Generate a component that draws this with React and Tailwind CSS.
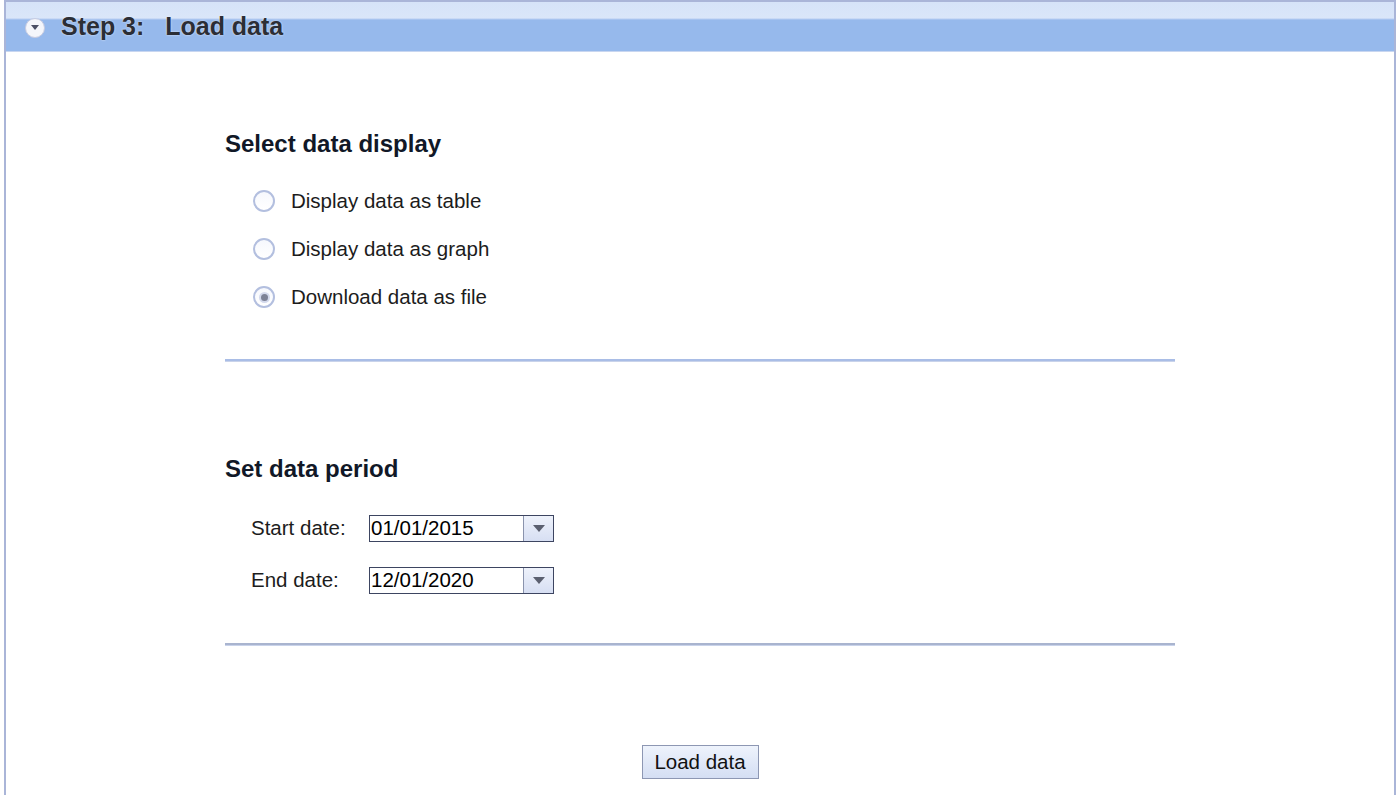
import React from "react";

function Radio({ checked }) {
  return (
    <span className="relative inline-flex items-center justify-center w-[22px] h-[22px] rounded-full border-2 border-[#b3bfdf] bg-gradient-to-b from-[#f6f8fd] to-[#ffffff] shrink-0">
      {checked && <span className="w-[7px] h-[7px] rounded-full bg-[#7d8296] ring-2 ring-[#d3d9ec]" />}
    </span>
  );
}

function DateBox({ value }) {
  return (
    <div className="flex w-[185px] h-[27px] border border-[#3d4561] bg-white">
      <div className="flex-1 flex items-center pl-[1px] text-[20.5px] text-black leading-none">{value}</div>
      <div className="w-[30px] border-l border-[#8a93ad] bg-gradient-to-b from-[#eef2fb] to-[#d7dff3] flex items-center justify-center">
        <svg width="12" height="8" viewBox="0 0 12 8"><path d="M0 0 L12 0 L6 7 Z" fill="#5b6070" /></svg>
      </div>
    </div>
  );
}

export default function App() {
  return (
    <div className="w-[1400px] h-[795px] bg-white overflow-hidden" style={{ fontFamily: '"Liberation Sans", Arial, sans-serif' }}>
      <div className="ml-[4px] w-[1392px] h-[795px] border-x-[2px] border-t-[2px] border-[#aab5d8] flex flex-col">
        <div className="h-[50px] flex items-center border-b border-[#c8d6f0] bg-[linear-gradient(#d6e3f8_0,#dae6f9_16px,#b8cdf2_17px,#96b9ec_18px,#96b9ec_100%)]">
          <span className="ml-[19px] mt-[2px] w-[20px] h-[20px] rounded-full bg-[#f4f6fb] border border-[#c7cbe0] flex items-center justify-center">
            <svg width="8" height="6" viewBox="0 0 8 6"><path d="M0 0 L8 0 L4 5 Z" fill="#4b5066" /></svg>
          </span>
          <span className="ml-[16px] text-[25px] font-bold text-[#2b2e36] whitespace-pre leading-none" style={{ textShadow: "0 0 2px #eef2fa" }}>Step 3:   Load data</span>
        </div>
        <div className="flex-1 pl-[219px]">
          <div className="w-[950px]">
            <h2 className="mt-[80px] text-[24px] font-bold text-[#111827] leading-none">Select data display</h2>
            <div className="mt-[34px] ml-[28px] flex flex-col gap-[26px]">
              {[
                ["Display data as table", false],
                ["Display data as graph", false],
                ["Download data as file", true],
              ].map(([t, c]) => (
                <label key={t} className="flex items-center gap-[16px] h-[22px] text-[20.5px] text-[#1c1c1c]">
                  <Radio checked={c} />
                  <span className="leading-none">{t}</span>
                </label>
              ))}
            </div>
            <div className="mt-[51px] h-[3px] bg-[#a9bde6] border-b border-[#c9d3ea]" />
            <h2 className="mt-[95px] text-[24px] font-bold text-[#111827] leading-none">Set data period</h2>
            <div className="mt-[34px] ml-[26px] flex flex-col gap-[25px]">
              <div className="flex items-center">
                <span className="w-[118px] text-[20.5px] text-[#1c1c1c] leading-none">Start date:</span>
                <DateBox value="01/01/2015" />
              </div>
              <div className="flex items-center">
                <span className="w-[118px] text-[20.5px] text-[#1c1c1c] leading-none">End date:</span>
                <DateBox value="12/01/2020" />
              </div>
            </div>
            <div className="mt-[49px] h-[3px] bg-[#a9b4cf] border-b border-[#c9d3ea]" />
            <div className="mt-[99px] flex justify-center">
              <button className="w-[117px] h-[34px] border border-[#8d97b3] bg-gradient-to-b from-[#eef3fc] to-[#d4def3] text-[20.5px] text-[#111] leading-none">Load data</button>
            </div>
          </div>
        </div>
      </div>
    </div>
  );
}
